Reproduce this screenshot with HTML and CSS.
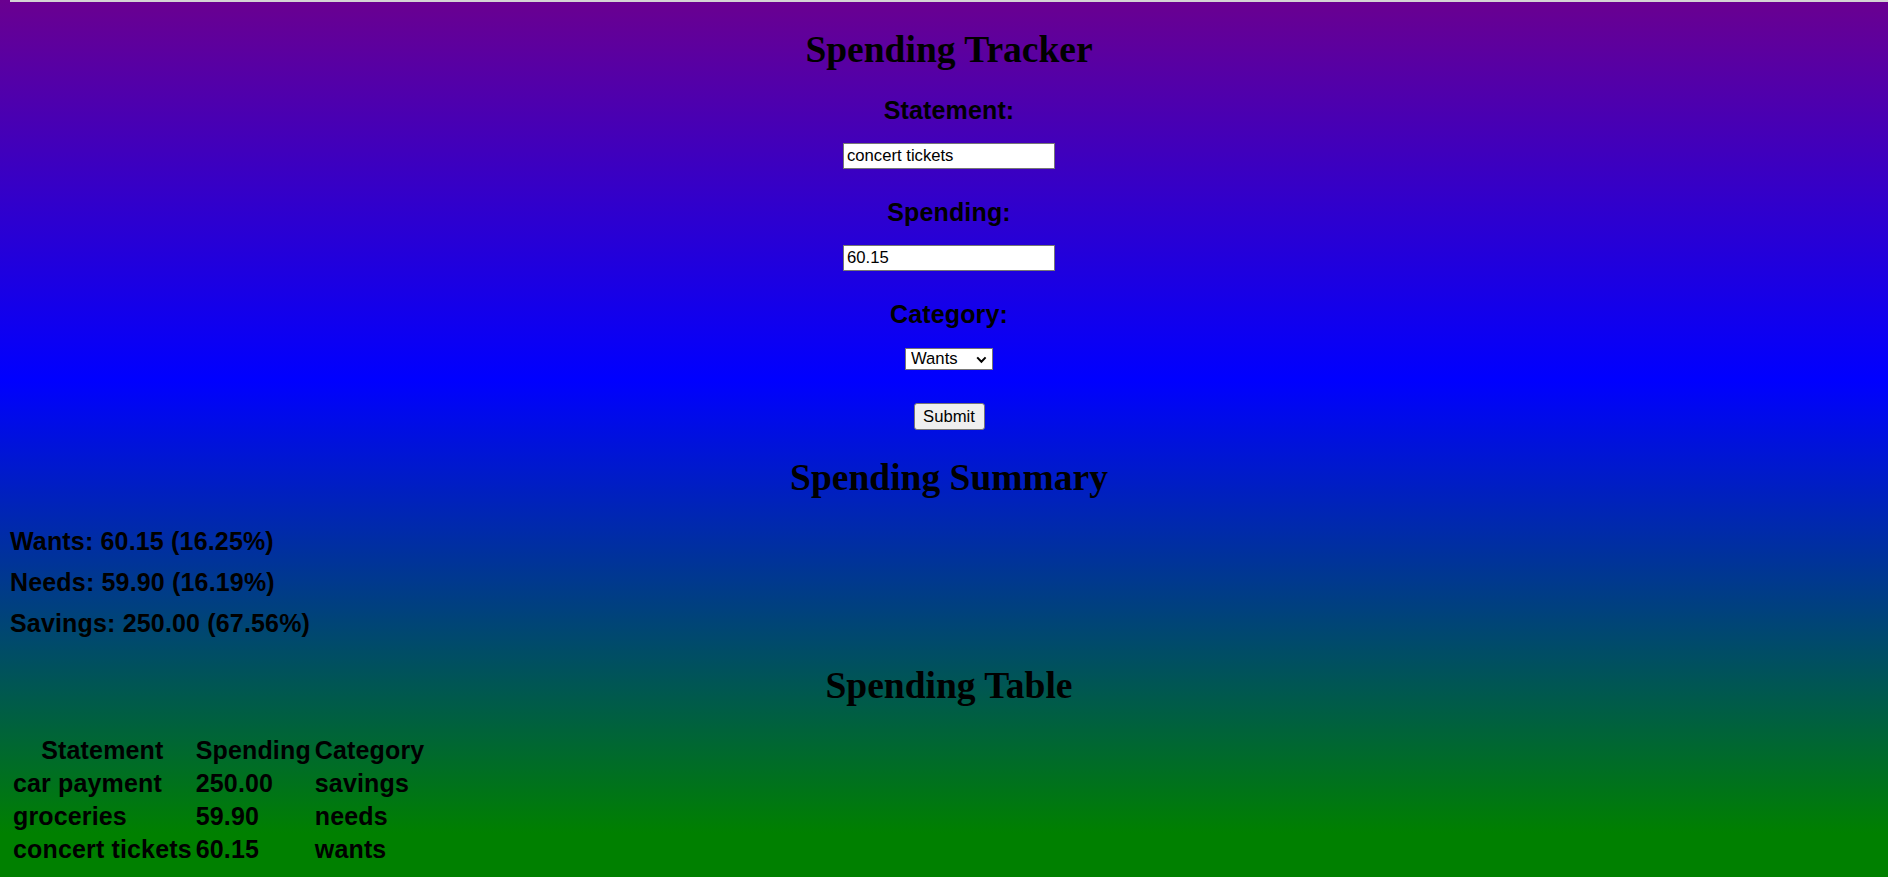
FILE: index.html
```html
<!DOCTYPE html>
<html lang="en">
<head>
<meta charset="utf-8">
<title>Spending Tracker</title>
<link rel="stylesheet" href="styles.css">
</head>
<body>
<div class="topline"></div>
<main class="app">
  <h1 class="title title-main">Spending Tracker</h1>
  <form class="form">
    <label class="field-label" for="statement">Statement:</label>
    <input class="text-input" id="statement" type="text" value="concert tickets">
    <label class="field-label field-label-next" for="spending">Spending:</label>
    <input class="text-input" id="spending" type="text" value="60.15">
    <label class="field-label field-label-next" for="category">Category:</label>
    <div class="select-wrap">
      <select class="select" id="category">
        <option>Wants</option>
        <option>Needs</option>
        <option>Savings</option>
      </select>
      <svg class="chevron" width="11" height="8" viewBox="0 0 11 8" aria-hidden="true"><path d="M1.2 1.4 L5.4 5.8 L9.6 1.4" fill="none" stroke="#000" stroke-width="2"/></svg>
    </div>
    <button class="submit" type="button">Submit</button>
  </form>
  <h1 class="title title-summary">Spending Summary</h1>
  <div class="summary">
    <div class="summary-line">Wants: 60.15 (16.25%)</div>
    <div class="summary-line">Needs: 59.90 (16.19%)</div>
    <div class="summary-line">Savings: 250.00 (67.56%)</div>
  </div>
  <h1 class="title title-table">Spending Table</h1>
  <table class="table">
    <thead>
      <tr><th>Statement</th><th>Spending</th><th>Category</th></tr>
    </thead>
    <tbody>
      <tr><td>car payment</td><td>250.00</td><td>savings</td></tr>
      <tr><td>groceries</td><td>59.90</td><td>needs</td></tr>
      <tr><td>concert tickets</td><td>60.15</td><td>wants</td></tr>
    </tbody>
  </table>
</main>
</body>
</html>
```
FILE: styles.css
```css
html {
  min-height: 100%;
  background-color: #008000;
  background-image: linear-gradient(to bottom, #6a0090 0px, #0000ff 380px, #008000 833px);
  background-repeat: no-repeat;
}

body {
  margin: 0;
  padding: 0 0 0 10px;
  color: #000;
  font-family: "Liberation Sans", Arial, sans-serif;
}

.topline {
  height: 2px;
  background: #d4d4d4;
}

.app {
  display: flex;
  flex-direction: column;
}

.title {
  margin: 0;
  font-family: "Liberation Serif", "Times New Roman", serif;
  font-weight: bold;
  font-size: 37.5px;
  line-height: 43px;
  text-align: center;
}

.title-main { margin-top: 25.5px; }
.title-summary { margin-top: 26px; }
.title-table { margin-top: 19px; }

.form {
  display: flex;
  flex-direction: column;
  align-items: center;
  margin: 0;
}

.field-label {
  display: block;
  margin-top: 25.6px;
  font-size: 25px;
  font-weight: bold;
  line-height: 29px;
  letter-spacing: 0.15px;
}

.field-label-next { margin-top: 28.8px; }

.text-input {
  box-sizing: border-box;
  width: 212px;
  height: 26px;
  margin: 18px 0 0;
  padding: 0 3px;
  border: 1px solid #767676;
  border-radius: 0;
  background: #fff;
  color: #000;
  font-family: "Liberation Sans", Arial, sans-serif;
  font-size: 16.67px;
}

.select-wrap {
  position: relative;
  width: 88px;
  height: 22px;
  margin-top: 19.8px;
}

.select {
  appearance: none;
  -webkit-appearance: none;
  box-sizing: border-box;
  width: 88px;
  height: 22px;
  margin: 0;
  padding: 0 0 0 5px;
  border: 1px solid #767676;
  border-radius: 0;
  background: #fff;
  color: #000;
  font-family: "Liberation Sans", Arial, sans-serif;
  font-size: 16.67px;
  line-height: 20px;
}

.chevron {
  position: absolute;
  left: 71px;
  top: 7.5px;
  pointer-events: none;
}

.submit {
  box-sizing: border-box;
  width: 71px;
  height: 27px;
  margin-top: 32.6px;
  padding: 0;
  border: 1px solid #767676;
  border-radius: 3px;
  background: #efefef;
  color: #000;
  font-family: "Liberation Sans", Arial, sans-serif;
  font-size: 16.67px;
}

.summary {
  margin-top: 22px;
}

.summary-line {
  font-size: 25px;
  font-weight: bold;
  line-height: 41.2px;
  letter-spacing: 0.17px;
}

.table {
  align-self: flex-start;
  margin-top: 26.6px;
  border-spacing: 2px;
  font-size: 25px;
  font-weight: bold;
  line-height: 29px;
  letter-spacing: 0.15px;
}

.table th,
.table td {
  padding: 1px;
}

.table th {
  text-align: center;
}

.table td {
  text-align: left;
}
```
